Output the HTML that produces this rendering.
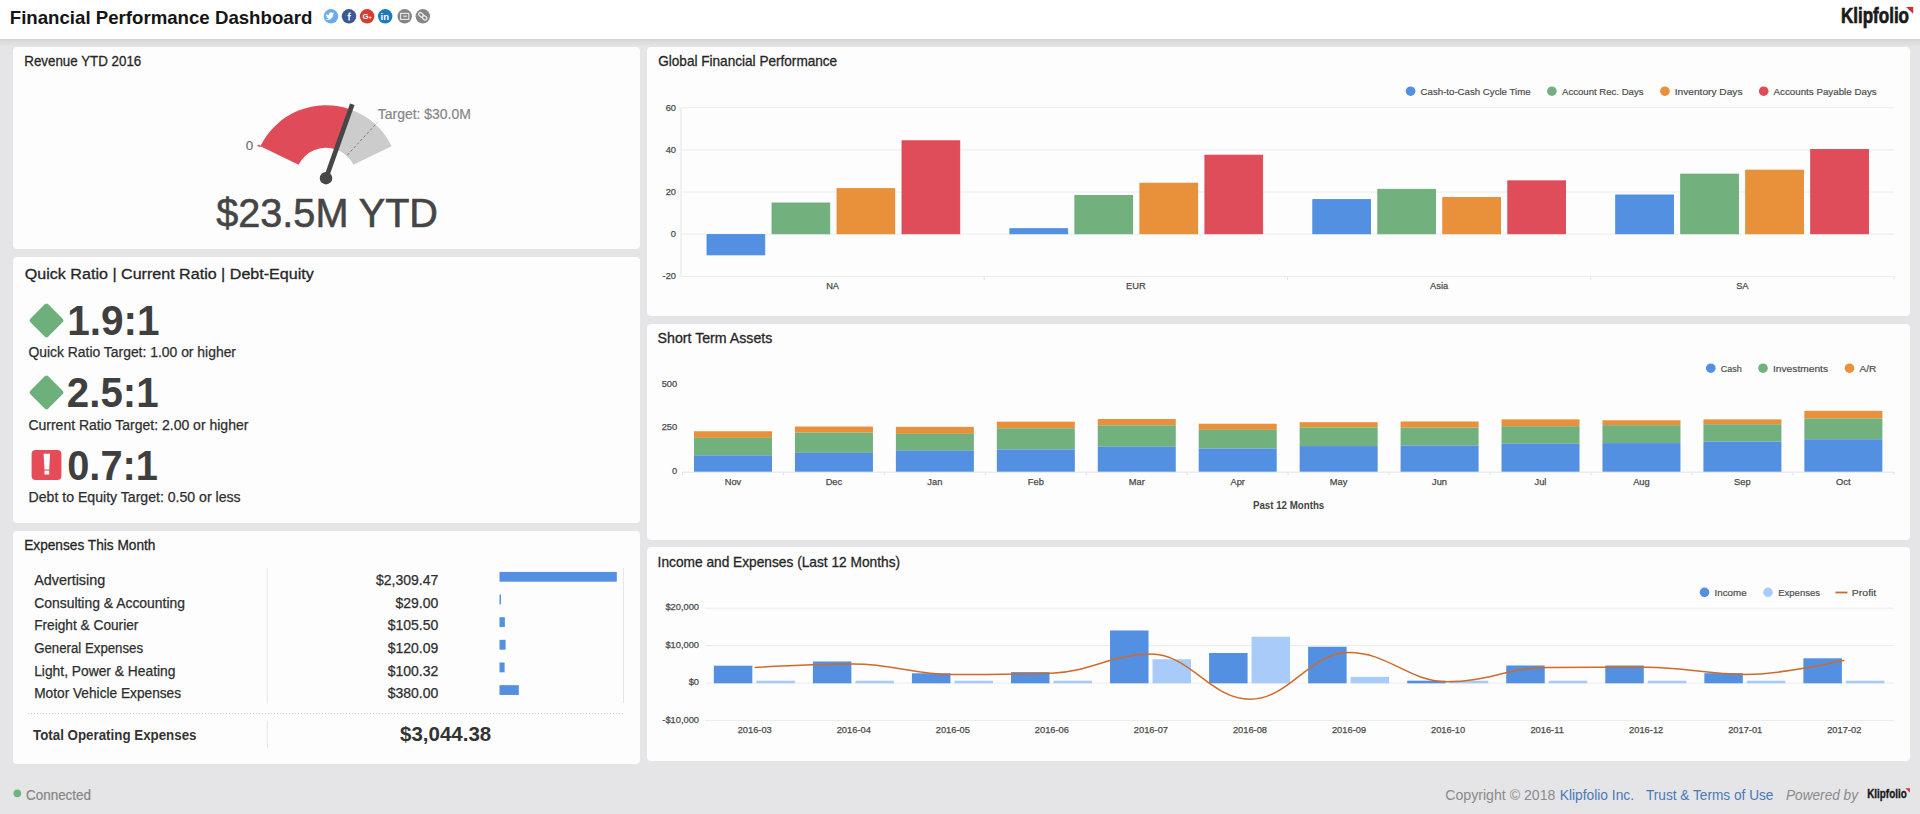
<!DOCTYPE html>
<html><head><meta charset="utf-8"><title>Financial Performance Dashboard</title>
<style>
html,body{margin:0;padding:0;}
body{width:1920px;height:814px;overflow:hidden;background:#e5e5e7;position:relative;font-family:"Liberation Sans", sans-serif;}
.hdr{position:absolute;left:0;top:0;width:1920px;height:39px;background:#fff;}
.shd{position:absolute;left:0;top:39px;width:1920px;height:8px;background:linear-gradient(#d2d2d4,#dcdcde 35%,#e5e5e7);}
.card{position:absolute;background:#fdfdfd;border-radius:4px;}
svg{position:absolute;left:0;top:0;}
</style></head><body>
<div class="hdr"></div><div class="shd"></div>
<div class="card" style="left:13px;top:47px;width:627px;height:202.4px"></div>
<div class="card" style="left:13px;top:257.4px;width:627px;height:265.7px"></div>
<div class="card" style="left:13px;top:530.5px;width:627px;height:233.5px"></div>
<div class="card" style="left:647px;top:47px;width:1263px;height:269px"></div>
<div class="card" style="left:647px;top:323.5px;width:1263px;height:216.5px"></div>
<div class="card" style="left:647px;top:547px;width:1263px;height:214px"></div>
<svg width="1920" height="814" viewBox="0 0 1920 814" font-family='"Liberation Sans", sans-serif'>
<text x="9.8" y="23.8" font-size="18.6" fill="#151515" font-weight="700" textLength="302.5" lengthAdjust="spacingAndGlyphs">Financial Performance Dashboard</text>
<circle cx="331" cy="16.3" r="7.2" fill="#6aaee8"/>
<circle cx="349" cy="16.3" r="7.2" fill="#3b5998"/>
<circle cx="367.1" cy="16.3" r="7.2" fill="#d83c30"/>
<circle cx="385.2" cy="16.3" r="7.2" fill="#1b7bbb"/>
<circle cx="404.7" cy="16.3" r="7.2" fill="#868686"/>
<circle cx="422.8" cy="16.3" r="7.2" fill="#868686"/>
<path d="M326.2,14.2 q1.2,0.9 2.6,0.8 q-0.3,-2.2 1.8,-2.6 q1,-0.2 1.8,0.6 l1.4,-0.5 l-0.8,1.1 l1.1,-0.3 l-0.9,0.9 q0,3.6 -3.4,5.2 q-2.1,0.9 -4,-0.2 q1.8,0 2.8,-0.9 q-2,-0.3 -2.3,-1.6 l0.9,0 q-1.6,-0.7 -1.5,-1.9 l0.8,0.3 q-0.9,-1 -0.3,-2.1z" fill="#fff" stroke="none" stroke-width="1"/>
<path d="M350.6,12.6 h-1.0 q-1.2,0 -1.2,1.3 v1.1 h-0.9 v1.3 h0.9 v4.2 h1.4 v-4.2 h1.2 l0.2,-1.3 h-1.4 v-0.9 q0,-0.4 0.4,-0.4 h0.8z" fill="#fff" stroke="none" stroke-width="1"/>
<text x="362.4" y="19.4" font-size="7.8" fill="#fff" font-weight="700">G</text>
<text x="368.4" y="18.6" font-size="5.5" fill="#fff" font-weight="700">+</text>
<text x="380.6" y="20.3" font-size="9.5" fill="#fff" font-weight="700">in</text>
<rect x="400.6" y="13.4" width="8.2" height="6" fill="none" stroke="#e8e8e8" stroke-width="1.1"/>
<rect x="403.30" y="15.60" width="3.50" height="1.20" fill="#e8e8e8"/>
<g transform="rotate(40 422.8 16.3)" fill="none" stroke="#e8e8e8" stroke-width="1.3"><rect x="417.9" y="14.6" width="5.2" height="3.4" rx="1.7"/><rect x="422.5" y="14.6" width="5.2" height="3.4" rx="1.7"/></g>
<text x="1841" y="23.1" font-size="21.8" fill="#1a1a1a" font-weight="700" textLength="68" lengthAdjust="spacingAndGlyphs" stroke="#1a1a1a" stroke-width="0.7">Klipfolio</text>
<path d="M1906,6.9 L1913.2,6.9 L1913.2,13.8 Z" fill="#e0262f" stroke="none" stroke-width="1"/>
<text x="24.25" y="66.1" font-size="15" fill="#262626" textLength="117" lengthAdjust="spacingAndGlyphs" stroke="#262626" stroke-width="0.3">Revenue YTD 2016</text>
<path d="M260.39,146.20 A73.0,73.0 0 0 1 350.43,109.41 L336.21,149.46 A30.5,30.5 0 0 0 298.59,164.83 Z" fill="#e04b5a" stroke="none" stroke-width="1"/>
<path d="M350.43,109.41 A73.0,73.0 0 0 1 391.61,146.20 L353.41,164.83 A30.5,30.5 0 0 0 336.21,149.46 Z" fill="#cccccc" stroke="none" stroke-width="1"/>
<line x1="347.35" y1="155.04" x2="377.17" y2="122.68" stroke="#7a7a7a" stroke-width="1.0" stroke-dasharray="2.6,2.2"/>
<line x1="326.0" y1="178.2" x2="352.28" y2="104.23" stroke="#474747" stroke-width="4.8"/>
<circle cx="326.0" cy="178.2" r="6.2" fill="#474747"/>
<text x="245.8" y="149.8" font-size="13.4" fill="#707070" stroke="#707070" stroke-width="0.15">0</text>
<line x1="257.6" y1="145.3" x2="260.5" y2="146.6" stroke="#e04b5a" stroke-width="1.6"/>
<text x="377.8" y="119.1" font-size="14.7" fill="#858585" textLength="93.1" lengthAdjust="spacingAndGlyphs" stroke="#858585" stroke-width="0.2">Target: $30.0M</text>
<text x="216.2" y="227.3" font-size="41.5" fill="#454545" textLength="221.8" lengthAdjust="spacingAndGlyphs" stroke="#454545" stroke-width="0.6">$23.5M YTD</text>
<text x="24.8" y="279.4" font-size="15.4" fill="#262626" textLength="289" lengthAdjust="spacingAndGlyphs" stroke="#262626" stroke-width="0.3">Quick Ratio | Current Ratio | Debt-Equity</text>
<rect x="33.84" y="307.74" width="25.31" height="25.31" rx="2.5" fill="#6eb07b" transform="rotate(45 46.5 320.4)"/>
<text x="67.2" y="335.3" font-size="42.5" fill="#3f3f3f" font-weight="700" textLength="92.4" lengthAdjust="spacingAndGlyphs">1.9:1</text>
<text x="28.4" y="357.4" font-size="14" fill="#2e2e2e" textLength="207.6" lengthAdjust="spacingAndGlyphs" stroke="#2e2e2e" stroke-width="0.25">Quick Ratio Target: 1.00 or higher</text>
<rect x="33.84" y="379.84" width="25.31" height="25.31" rx="2.5" fill="#6eb07b" transform="rotate(45 46.5 392.5)"/>
<text x="66.8" y="407.4" font-size="42.5" fill="#3f3f3f" font-weight="700" textLength="91.8" lengthAdjust="spacingAndGlyphs">2.5:1</text>
<text x="28.4" y="429.5" font-size="14" fill="#2e2e2e" textLength="220" lengthAdjust="spacingAndGlyphs" stroke="#2e2e2e" stroke-width="0.25">Current Ratio Target: 2.00 or higher</text>
<rect x="31.6" y="450" width="29.8" height="30" rx="4" fill="#e64b58"/>
<path d="M43.6,453.8 L50.1,453.8 L49.2,469.5 L44.5,469.5 Z" fill="#fff" stroke="none" stroke-width="1"/>
<rect x="44.50" y="470.60" width="4.70" height="3.90" fill="#fff"/>
<text x="67.2" y="480" font-size="42.5" fill="#3f3f3f" font-weight="700" textLength="90.8" lengthAdjust="spacingAndGlyphs">0.7:1</text>
<text x="28.6" y="501.5" font-size="14" fill="#2e2e2e" textLength="212" lengthAdjust="spacingAndGlyphs" stroke="#2e2e2e" stroke-width="0.25">Debt to Equity Target: 0.50 or less</text>
<text x="24.2" y="550" font-size="14.5" fill="#262626" textLength="131.3" lengthAdjust="spacingAndGlyphs" stroke="#262626" stroke-width="0.3">Expenses This Month</text>
<text x="34.2" y="584.9" font-size="14" fill="#2e2e2e" textLength="71" lengthAdjust="spacingAndGlyphs" stroke="#2e2e2e" stroke-width="0.25">Advertising</text>
<text x="438.3" y="584.9" font-size="14" fill="#2e2e2e" text-anchor="end" stroke="#2e2e2e" stroke-width="0.25">$2,309.47</text>
<rect x="499.50" y="571.90" width="117.30" height="9.80" fill="#5390e1"/>
<text x="34.2" y="607.55" font-size="14" fill="#2e2e2e" textLength="150.8" lengthAdjust="spacingAndGlyphs" stroke="#2e2e2e" stroke-width="0.25">Consulting &amp; Accounting</text>
<text x="438.3" y="607.55" font-size="14" fill="#2e2e2e" text-anchor="end" stroke="#2e2e2e" stroke-width="0.25">$29.00</text>
<rect x="499.50" y="594.55" width="1.47" height="9.80" fill="#5390e1"/>
<text x="34.2" y="630.2" font-size="14" fill="#2e2e2e" textLength="104.2" lengthAdjust="spacingAndGlyphs" stroke="#2e2e2e" stroke-width="0.25">Freight &amp; Courier</text>
<text x="438.3" y="630.2" font-size="14" fill="#2e2e2e" text-anchor="end" stroke="#2e2e2e" stroke-width="0.25">$105.50</text>
<rect x="499.50" y="617.20" width="5.36" height="9.80" fill="#5390e1"/>
<text x="34.2" y="652.85" font-size="14" fill="#2e2e2e" textLength="108.9" lengthAdjust="spacingAndGlyphs" stroke="#2e2e2e" stroke-width="0.25">General Expenses</text>
<text x="438.3" y="652.85" font-size="14" fill="#2e2e2e" text-anchor="end" stroke="#2e2e2e" stroke-width="0.25">$120.09</text>
<rect x="499.50" y="639.85" width="6.10" height="9.80" fill="#5390e1"/>
<text x="34.2" y="675.5" font-size="14" fill="#2e2e2e" textLength="141.3" lengthAdjust="spacingAndGlyphs" stroke="#2e2e2e" stroke-width="0.25">Light, Power &amp; Heating</text>
<text x="438.3" y="675.5" font-size="14" fill="#2e2e2e" text-anchor="end" stroke="#2e2e2e" stroke-width="0.25">$100.32</text>
<rect x="499.50" y="662.50" width="5.10" height="9.80" fill="#5390e1"/>
<text x="34.2" y="698.15" font-size="14" fill="#2e2e2e" textLength="146.9" lengthAdjust="spacingAndGlyphs" stroke="#2e2e2e" stroke-width="0.25">Motor Vehicle Expenses</text>
<text x="438.3" y="698.15" font-size="14" fill="#2e2e2e" text-anchor="end" stroke="#2e2e2e" stroke-width="0.25">$380.00</text>
<rect x="499.50" y="685.15" width="19.30" height="9.80" fill="#5390e1"/>
<line x1="267.3" y1="568" x2="267.3" y2="703.5" stroke="#e6e6e6" stroke-width="1"/>
<line x1="623.5" y1="568" x2="623.5" y2="703" stroke="#e6e6e6" stroke-width="1"/>
<line x1="28" y1="713.6" x2="624" y2="713.6" stroke="#c8c8c8" stroke-width="1" stroke-dasharray="1,2"/>
<line x1="267.3" y1="721" x2="267.3" y2="748" stroke="#e6e6e6" stroke-width="1"/>
<text x="33" y="740" font-size="14" fill="#333" font-weight="700" textLength="163.5" lengthAdjust="spacingAndGlyphs">Total Operating Expenses</text>
<text x="400" y="741.2" font-size="20.5" fill="#333" font-weight="700" textLength="91.2" lengthAdjust="spacingAndGlyphs">$3,044.38</text>
<text x="658.2" y="66.2" font-size="14.5" fill="#262626" textLength="179" lengthAdjust="spacingAndGlyphs" stroke="#262626" stroke-width="0.3">Global Financial Performance</text>
<line x1="681" y1="107.71999999999998" x2="1894" y2="107.71999999999998" stroke="#ececec" stroke-width="1"/>
<text x="676" y="110.62" font-size="9.3" fill="#4a4a4a" text-anchor="end" stroke="#4a4a4a" stroke-width="0.25">60</text>
<line x1="681" y1="149.88" x2="1894" y2="149.88" stroke="#ececec" stroke-width="1"/>
<text x="676" y="152.78" font-size="9.3" fill="#4a4a4a" text-anchor="end" stroke="#4a4a4a" stroke-width="0.25">40</text>
<line x1="681" y1="192.04" x2="1894" y2="192.04" stroke="#ececec" stroke-width="1"/>
<text x="676" y="194.94" font-size="9.3" fill="#4a4a4a" text-anchor="end" stroke="#4a4a4a" stroke-width="0.25">20</text>
<line x1="681" y1="234.2" x2="1894" y2="234.2" stroke="#ececec" stroke-width="1"/>
<text x="676" y="237.1" font-size="9.3" fill="#4a4a4a" text-anchor="end" stroke="#4a4a4a" stroke-width="0.25">0</text>
<line x1="681" y1="276.36" x2="1894" y2="276.36" stroke="#ececec" stroke-width="1"/>
<text x="676" y="279.26" font-size="9.3" fill="#4a4a4a" text-anchor="end" stroke="#4a4a4a" stroke-width="0.25">-20</text>
<line x1="681" y1="108" x2="681" y2="276" stroke="#e4e4e4" stroke-width="1"/>
<line x1="984.25" y1="276.4" x2="984.25" y2="280" stroke="#e4e4e4" stroke-width="1"/>
<text x="832.62" y="289.2" font-size="9.3" fill="#4a4a4a" text-anchor="middle" stroke="#4a4a4a" stroke-width="0.25">NA</text>
<rect x="707.00" y="234.60" width="57.80" height="20.28" fill="#5390e1" stroke="#4487df" stroke-width="0.8"/>
<rect x="772.00" y="202.98" width="57.80" height="30.82" fill="#72b07e" stroke="#66a874" stroke-width="0.8"/>
<rect x="837.00" y="188.65" width="57.80" height="45.15" fill="#e8913a" stroke="#e4852b" stroke-width="0.8"/>
<rect x="902.00" y="140.79" width="57.80" height="93.01" fill="#df4d5b" stroke="#d9404f" stroke-width="0.8"/>
<line x1="1287.5" y1="276.4" x2="1287.5" y2="280" stroke="#e4e4e4" stroke-width="1"/>
<text x="1135.88" y="289.2" font-size="9.3" fill="#4a4a4a" text-anchor="middle" stroke="#4a4a4a" stroke-width="0.25">EUR</text>
<rect x="1009.90" y="228.70" width="57.80" height="5.10" fill="#5390e1" stroke="#4487df" stroke-width="0.8"/>
<rect x="1074.90" y="195.39" width="57.80" height="38.41" fill="#72b07e" stroke="#66a874" stroke-width="0.8"/>
<rect x="1139.90" y="183.16" width="57.80" height="50.64" fill="#e8913a" stroke="#e4852b" stroke-width="0.8"/>
<rect x="1204.90" y="155.13" width="57.80" height="78.67" fill="#df4d5b" stroke="#d9404f" stroke-width="0.8"/>
<line x1="1590.75" y1="276.4" x2="1590.75" y2="280" stroke="#e4e4e4" stroke-width="1"/>
<text x="1439.12" y="289.2" font-size="9.3" fill="#4a4a4a" text-anchor="middle" stroke="#4a4a4a" stroke-width="0.25">Asia</text>
<rect x="1312.80" y="199.61" width="57.80" height="34.19" fill="#5390e1" stroke="#4487df" stroke-width="0.8"/>
<rect x="1377.80" y="189.28" width="57.80" height="44.52" fill="#72b07e" stroke="#66a874" stroke-width="0.8"/>
<rect x="1442.80" y="197.50" width="57.80" height="36.30" fill="#e8913a" stroke="#e4852b" stroke-width="0.8"/>
<rect x="1507.80" y="180.85" width="57.80" height="52.95" fill="#df4d5b" stroke="#d9404f" stroke-width="0.8"/>
<line x1="1894.0" y1="276.4" x2="1894.0" y2="280" stroke="#e4e4e4" stroke-width="1"/>
<text x="1742.38" y="289.2" font-size="9.3" fill="#4a4a4a" text-anchor="middle" stroke="#4a4a4a" stroke-width="0.25">SA</text>
<rect x="1615.70" y="194.97" width="57.80" height="38.83" fill="#5390e1" stroke="#4487df" stroke-width="0.8"/>
<rect x="1680.70" y="174.10" width="57.80" height="59.70" fill="#72b07e" stroke="#66a874" stroke-width="0.8"/>
<rect x="1745.70" y="170.10" width="57.80" height="63.70" fill="#e8913a" stroke="#e4852b" stroke-width="0.8"/>
<rect x="1810.70" y="149.44" width="57.80" height="84.36" fill="#df4d5b" stroke="#d9404f" stroke-width="0.8"/>
<circle cx="1410.6" cy="91.2" r="4.8" fill="#5390e1"/>
<text x="1420.6" y="95.2" font-size="9.8" fill="#4d4d4d" textLength="110" lengthAdjust="spacingAndGlyphs" stroke="#4d4d4d" stroke-width="0.2">Cash-to-Cash Cycle Time</text>
<circle cx="1551.9" cy="91.2" r="4.8" fill="#72b07e"/>
<text x="1562.1" y="95.2" font-size="9.8" fill="#4d4d4d" textLength="81.4" lengthAdjust="spacingAndGlyphs" stroke="#4d4d4d" stroke-width="0.2">Account Rec. Days</text>
<circle cx="1664.9" cy="91.2" r="4.8" fill="#e8913a"/>
<text x="1674.7" y="95.2" font-size="9.8" fill="#4d4d4d" textLength="67.8" lengthAdjust="spacingAndGlyphs" stroke="#4d4d4d" stroke-width="0.2">Inventory Days</text>
<circle cx="1763.7" cy="91.2" r="4.8" fill="#df4d5b"/>
<text x="1773.5" y="95.2" font-size="9.8" fill="#4d4d4d" textLength="103.2" lengthAdjust="spacingAndGlyphs" stroke="#4d4d4d" stroke-width="0.2">Accounts Payable Days</text>
<text x="657.6" y="342.7" font-size="14.5" fill="#262626" textLength="114.7" lengthAdjust="spacingAndGlyphs" stroke="#262626" stroke-width="0.3">Short Term Assets</text>
<text x="677.2" y="386.6" font-size="9.3" fill="#4a4a4a" text-anchor="end" stroke="#4a4a4a" stroke-width="0.25">500</text>
<text x="677.2" y="430.2" font-size="9.3" fill="#4a4a4a" text-anchor="end" stroke="#4a4a4a" stroke-width="0.25">250</text>
<text x="677.2" y="473.8" font-size="9.3" fill="#4a4a4a" text-anchor="end" stroke="#4a4a4a" stroke-width="0.25">0</text>
<line x1="682.5" y1="472.2" x2="1893.8" y2="472.2" stroke="#e4e4e4" stroke-width="1"/>
<line x1="783.44" y1="472" x2="783.44" y2="475" stroke="#e4e4e4" stroke-width="1"/>
<line x1="682.5" y1="472" x2="682.5" y2="475" stroke="#e4e4e4" stroke-width="1"/>
<text x="732.97" y="485.2" font-size="9.3" fill="#4a4a4a" text-anchor="middle" stroke="#4a4a4a" stroke-width="0.25">Nov</text>
<rect x="694.00" y="431.24" width="78.00" height="6.63" fill="#e8913a"/>
<rect x="694.00" y="437.87" width="78.00" height="17.44" fill="#72b07e"/>
<rect x="694.00" y="455.31" width="78.00" height="16.39" fill="#5390e1"/>
<line x1="884.38" y1="472" x2="884.38" y2="475" stroke="#e4e4e4" stroke-width="1"/>
<text x="833.91" y="485.2" font-size="9.3" fill="#4a4a4a" text-anchor="middle" stroke="#4a4a4a" stroke-width="0.25">Dec</text>
<rect x="794.94" y="426.53" width="78.00" height="6.10" fill="#e8913a"/>
<rect x="794.94" y="432.63" width="78.00" height="20.23" fill="#72b07e"/>
<rect x="794.94" y="452.86" width="78.00" height="18.84" fill="#5390e1"/>
<line x1="985.33" y1="472" x2="985.33" y2="475" stroke="#e4e4e4" stroke-width="1"/>
<text x="934.85" y="485.2" font-size="9.3" fill="#4a4a4a" text-anchor="middle" stroke="#4a4a4a" stroke-width="0.25">Jan</text>
<rect x="895.88" y="426.88" width="78.00" height="6.98" fill="#e8913a"/>
<rect x="895.88" y="433.86" width="78.00" height="16.92" fill="#72b07e"/>
<rect x="895.88" y="450.77" width="78.00" height="20.93" fill="#5390e1"/>
<line x1="1086.27" y1="472" x2="1086.27" y2="475" stroke="#e4e4e4" stroke-width="1"/>
<text x="1035.8" y="485.2" font-size="9.3" fill="#4a4a4a" text-anchor="middle" stroke="#4a4a4a" stroke-width="0.25">Feb</text>
<rect x="996.83" y="421.65" width="78.00" height="6.63" fill="#e8913a"/>
<rect x="996.83" y="428.27" width="78.00" height="21.10" fill="#72b07e"/>
<rect x="996.83" y="449.38" width="78.00" height="22.32" fill="#5390e1"/>
<line x1="1187.21" y1="472" x2="1187.21" y2="475" stroke="#e4e4e4" stroke-width="1"/>
<text x="1136.74" y="485.2" font-size="9.3" fill="#4a4a4a" text-anchor="middle" stroke="#4a4a4a" stroke-width="0.25">Mar</text>
<rect x="1097.77" y="419.03" width="78.00" height="6.28" fill="#e8913a"/>
<rect x="1097.77" y="425.31" width="78.00" height="21.45" fill="#72b07e"/>
<rect x="1097.77" y="446.76" width="78.00" height="24.94" fill="#5390e1"/>
<line x1="1288.15" y1="472" x2="1288.15" y2="475" stroke="#e4e4e4" stroke-width="1"/>
<text x="1237.68" y="485.2" font-size="9.3" fill="#4a4a4a" text-anchor="middle" stroke="#4a4a4a" stroke-width="0.25">Apr</text>
<rect x="1198.71" y="423.74" width="78.00" height="6.10" fill="#e8913a"/>
<rect x="1198.71" y="429.84" width="78.00" height="18.66" fill="#72b07e"/>
<rect x="1198.71" y="448.50" width="78.00" height="23.20" fill="#5390e1"/>
<line x1="1389.09" y1="472" x2="1389.09" y2="475" stroke="#e4e4e4" stroke-width="1"/>
<text x="1338.62" y="485.2" font-size="9.3" fill="#4a4a4a" text-anchor="middle" stroke="#4a4a4a" stroke-width="0.25">May</text>
<rect x="1299.65" y="422.17" width="78.00" height="5.23" fill="#e8913a"/>
<rect x="1299.65" y="427.40" width="78.00" height="18.66" fill="#72b07e"/>
<rect x="1299.65" y="446.06" width="78.00" height="25.64" fill="#5390e1"/>
<line x1="1490.03" y1="472" x2="1490.03" y2="475" stroke="#e4e4e4" stroke-width="1"/>
<text x="1439.56" y="485.2" font-size="9.3" fill="#4a4a4a" text-anchor="middle" stroke="#4a4a4a" stroke-width="0.25">Jun</text>
<rect x="1400.59" y="421.47" width="78.00" height="6.10" fill="#e8913a"/>
<rect x="1400.59" y="427.58" width="78.00" height="17.96" fill="#72b07e"/>
<rect x="1400.59" y="445.54" width="78.00" height="26.16" fill="#5390e1"/>
<line x1="1590.97" y1="472" x2="1590.97" y2="475" stroke="#e4e4e4" stroke-width="1"/>
<text x="1540.5" y="485.2" font-size="9.3" fill="#4a4a4a" text-anchor="middle" stroke="#4a4a4a" stroke-width="0.25">Jul</text>
<rect x="1501.53" y="419.38" width="78.00" height="6.80" fill="#e8913a"/>
<rect x="1501.53" y="426.18" width="78.00" height="17.61" fill="#72b07e"/>
<rect x="1501.53" y="443.80" width="78.00" height="27.90" fill="#5390e1"/>
<line x1="1691.92" y1="472" x2="1691.92" y2="475" stroke="#e4e4e4" stroke-width="1"/>
<text x="1641.45" y="485.2" font-size="9.3" fill="#4a4a4a" text-anchor="middle" stroke="#4a4a4a" stroke-width="0.25">Aug</text>
<rect x="1602.47" y="420.25" width="78.00" height="4.88" fill="#e8913a"/>
<rect x="1602.47" y="425.14" width="78.00" height="17.96" fill="#72b07e"/>
<rect x="1602.47" y="443.10" width="78.00" height="28.60" fill="#5390e1"/>
<line x1="1792.86" y1="472" x2="1792.86" y2="475" stroke="#e4e4e4" stroke-width="1"/>
<text x="1742.39" y="485.2" font-size="9.3" fill="#4a4a4a" text-anchor="middle" stroke="#4a4a4a" stroke-width="0.25">Sep</text>
<rect x="1703.42" y="419.38" width="78.00" height="4.88" fill="#e8913a"/>
<rect x="1703.42" y="424.26" width="78.00" height="17.44" fill="#72b07e"/>
<rect x="1703.42" y="441.70" width="78.00" height="30.00" fill="#5390e1"/>
<line x1="1893.8" y1="472" x2="1893.8" y2="475" stroke="#e4e4e4" stroke-width="1"/>
<text x="1843.33" y="485.2" font-size="9.3" fill="#4a4a4a" text-anchor="middle" stroke="#4a4a4a" stroke-width="0.25">Oct</text>
<rect x="1804.36" y="410.83" width="78.00" height="7.67" fill="#e8913a"/>
<rect x="1804.36" y="418.51" width="78.00" height="20.75" fill="#72b07e"/>
<rect x="1804.36" y="439.26" width="78.00" height="32.44" fill="#5390e1"/>
<text x="1288.6" y="509.3" font-size="10" fill="#444" font-weight="700" text-anchor="middle" textLength="71.3" lengthAdjust="spacingAndGlyphs">Past 12 Months</text>
<circle cx="1710.8" cy="368.2" r="4.8" fill="#5390e1"/>
<text x="1720.8" y="372.2" font-size="9.8" fill="#4d4d4d" textLength="21" lengthAdjust="spacingAndGlyphs" stroke="#4d4d4d" stroke-width="0.2">Cash</text>
<circle cx="1763" cy="368.2" r="4.8" fill="#72b07e"/>
<text x="1773" y="372.2" font-size="9.8" fill="#4d4d4d" textLength="55" lengthAdjust="spacingAndGlyphs" stroke="#4d4d4d" stroke-width="0.2">Investments</text>
<circle cx="1849.5" cy="368.2" r="4.8" fill="#e8913a"/>
<text x="1859.5" y="372.2" font-size="9.8" fill="#4d4d4d" textLength="16.8" lengthAdjust="spacingAndGlyphs" stroke="#4d4d4d" stroke-width="0.2">A/R</text>
<text x="657.6" y="566.7" font-size="14.5" fill="#262626" textLength="242.5" lengthAdjust="spacingAndGlyphs" stroke="#262626" stroke-width="0.3">Income and Expenses (Last 12 Months)</text>
<line x1="705.2" y1="608.2" x2="1893.8" y2="608.2" stroke="#ececec" stroke-width="1"/>
<text x="699" y="610.4" font-size="9.3" fill="#4a4a4a" text-anchor="end" stroke="#4a4a4a" stroke-width="0.25">$20,000</text>
<line x1="705.2" y1="645.65" x2="1893.8" y2="645.65" stroke="#ececec" stroke-width="1"/>
<text x="699" y="647.85" font-size="9.3" fill="#4a4a4a" text-anchor="end" stroke="#4a4a4a" stroke-width="0.25">$10,000</text>
<line x1="705.2" y1="683.1" x2="1893.8" y2="683.1" stroke="#ececec" stroke-width="1"/>
<text x="699" y="685.3" font-size="9.3" fill="#4a4a4a" text-anchor="end" stroke="#4a4a4a" stroke-width="0.25">$0</text>
<line x1="705.2" y1="720.55" x2="1893.8" y2="720.55" stroke="#ececec" stroke-width="1"/>
<text x="699" y="722.75" font-size="9.3" fill="#4a4a4a" text-anchor="end" stroke="#4a4a4a" stroke-width="0.25">-$10,000</text>
<text x="754.73" y="733.2" font-size="9.3" fill="#4a4a4a" text-anchor="middle" stroke="#4a4a4a" stroke-width="0.25">2016-03</text>
<rect x="713.83" y="665.70" width="38.50" height="17.60" fill="#5390e1"/>
<rect x="756.33" y="680.70" width="38.50" height="2.60" fill="#a9cbfa"/>
<text x="853.77" y="733.2" font-size="9.3" fill="#4a4a4a" text-anchor="middle" stroke="#4a4a4a" stroke-width="0.25">2016-04</text>
<rect x="812.88" y="661.50" width="38.50" height="21.80" fill="#5390e1"/>
<rect x="855.38" y="680.70" width="38.50" height="2.60" fill="#a9cbfa"/>
<text x="952.83" y="733.2" font-size="9.3" fill="#4a4a4a" text-anchor="middle" stroke="#4a4a4a" stroke-width="0.25">2016-05</text>
<rect x="911.93" y="673.30" width="38.50" height="10.00" fill="#5390e1"/>
<rect x="954.43" y="680.70" width="38.50" height="2.60" fill="#a9cbfa"/>
<text x="1051.88" y="733.2" font-size="9.3" fill="#4a4a4a" text-anchor="middle" stroke="#4a4a4a" stroke-width="0.25">2016-06</text>
<rect x="1010.98" y="672.10" width="38.50" height="11.20" fill="#5390e1"/>
<rect x="1053.47" y="680.70" width="38.50" height="2.60" fill="#a9cbfa"/>
<text x="1150.93" y="733.2" font-size="9.3" fill="#4a4a4a" text-anchor="middle" stroke="#4a4a4a" stroke-width="0.25">2016-07</text>
<rect x="1110.03" y="630.50" width="38.50" height="52.80" fill="#5390e1"/>
<rect x="1152.53" y="659.25" width="38.50" height="24.05" fill="#a9cbfa"/>
<text x="1249.98" y="733.2" font-size="9.3" fill="#4a4a4a" text-anchor="middle" stroke="#4a4a4a" stroke-width="0.25">2016-08</text>
<rect x="1209.08" y="653.00" width="38.50" height="30.30" fill="#5390e1"/>
<rect x="1251.58" y="636.75" width="38.50" height="46.55" fill="#a9cbfa"/>
<text x="1349.03" y="733.2" font-size="9.3" fill="#4a4a4a" text-anchor="middle" stroke="#4a4a4a" stroke-width="0.25">2016-09</text>
<rect x="1308.12" y="646.75" width="38.50" height="36.55" fill="#5390e1"/>
<rect x="1350.62" y="676.90" width="38.50" height="6.40" fill="#a9cbfa"/>
<text x="1448.08" y="733.2" font-size="9.3" fill="#4a4a4a" text-anchor="middle" stroke="#4a4a4a" stroke-width="0.25">2016-10</text>
<rect x="1407.18" y="680.70" width="38.50" height="2.60" fill="#5390e1"/>
<rect x="1449.68" y="680.70" width="38.50" height="2.60" fill="#a9cbfa"/>
<text x="1547.12" y="733.2" font-size="9.3" fill="#4a4a4a" text-anchor="middle" stroke="#4a4a4a" stroke-width="0.25">2016-11</text>
<rect x="1506.22" y="665.50" width="38.50" height="17.80" fill="#5390e1"/>
<rect x="1548.72" y="680.70" width="38.50" height="2.60" fill="#a9cbfa"/>
<text x="1646.18" y="733.2" font-size="9.3" fill="#4a4a4a" text-anchor="middle" stroke="#4a4a4a" stroke-width="0.25">2016-12</text>
<rect x="1605.28" y="665.50" width="38.50" height="17.80" fill="#5390e1"/>
<rect x="1647.78" y="680.70" width="38.50" height="2.60" fill="#a9cbfa"/>
<text x="1745.23" y="733.2" font-size="9.3" fill="#4a4a4a" text-anchor="middle" stroke="#4a4a4a" stroke-width="0.25">2017-01</text>
<rect x="1704.33" y="673.20" width="38.50" height="10.10" fill="#5390e1"/>
<rect x="1746.83" y="680.70" width="38.50" height="2.60" fill="#a9cbfa"/>
<text x="1844.28" y="733.2" font-size="9.3" fill="#4a4a4a" text-anchor="middle" stroke="#4a4a4a" stroke-width="0.25">2017-02</text>
<rect x="1803.38" y="658.30" width="38.50" height="25.00" fill="#5390e1"/>
<rect x="1845.88" y="680.70" width="38.50" height="2.60" fill="#a9cbfa"/>
<path d="M754.73,667.40 C754.73,667.40 814.15,664.00 853.77,664.00 C893.40,664.00 913.21,674.60 952.83,674.60 C992.45,674.60 1012.25,674.60 1051.88,673.20 C1091.50,671.80 1111.31,654.00 1150.93,654.00 C1190.55,654.00 1210.36,699.20 1249.98,699.20 C1289.60,699.20 1309.41,652.60 1349.03,652.60 C1388.64,652.60 1408.46,681.80 1448.08,681.80 C1487.70,681.80 1507.51,667.70 1547.12,667.50 C1586.75,667.30 1606.56,667.30 1646.18,667.30 C1685.80,667.30 1705.61,674.40 1745.23,674.40 C1784.85,674.40 1844.28,660.20 1844.28,660.20" fill="none" stroke="#cf6a28" stroke-width="1.5"/>
<circle cx="1704.5" cy="592.3" r="4.8" fill="#5390e1"/>
<text x="1714.5" y="596.3" font-size="9.8" fill="#4d4d4d" textLength="32.2" lengthAdjust="spacingAndGlyphs" stroke="#4d4d4d" stroke-width="0.2">Income</text>
<circle cx="1768" cy="592.3" r="4.8" fill="#a9cbfa"/>
<text x="1778.2" y="596.3" font-size="9.8" fill="#4d4d4d" textLength="41.8" lengthAdjust="spacingAndGlyphs" stroke="#4d4d4d" stroke-width="0.2">Expenses</text>
<line x1="1835.5" y1="592.5" x2="1847.5" y2="592.5" stroke="#cf6a28" stroke-width="1.8"/>
<text x="1851.8" y="596.3" font-size="9.8" fill="#4d4d4d" textLength="24.5" lengthAdjust="spacingAndGlyphs" stroke="#4d4d4d" stroke-width="0.2">Profit</text>
<circle cx="17.3" cy="793.4" r="3.8" fill="#6cb57a"/>
<text x="26" y="799.6" font-size="13.8" fill="#858585" textLength="65" lengthAdjust="spacingAndGlyphs" stroke="#858585" stroke-width="0.2">Connected</text>
<text x="1445.3" y="800.2" font-size="14" fill="#8a8a8a" textLength="110.1" lengthAdjust="spacingAndGlyphs">Copyright © 2018</text>
<text x="1559.8" y="800.2" font-size="14" fill="#4a78b8" textLength="74.2" lengthAdjust="spacingAndGlyphs">Klipfolio Inc.</text>
<text x="1786" y="800.2" font-size="14" fill="#8a8a8a" font-style="italic" textLength="72" lengthAdjust="spacingAndGlyphs">Powered by</text>
<text x="1646" y="800.2" font-size="14" fill="#4a78b8" textLength="127.4" lengthAdjust="spacingAndGlyphs">Trust &amp; Terms of Use</text>
<text x="1867.2" y="797.6" font-size="12.8" fill="#151515" font-weight="700" textLength="39.5" lengthAdjust="spacingAndGlyphs" stroke="#151515" stroke-width="0.35">Klipfolio</text>
<path d="M1905.3,788.2 L1909.9,788.2 L1909.9,792.6 Z" fill="#e0262f" stroke="none" stroke-width="1"/>
</svg>
</body></html>
